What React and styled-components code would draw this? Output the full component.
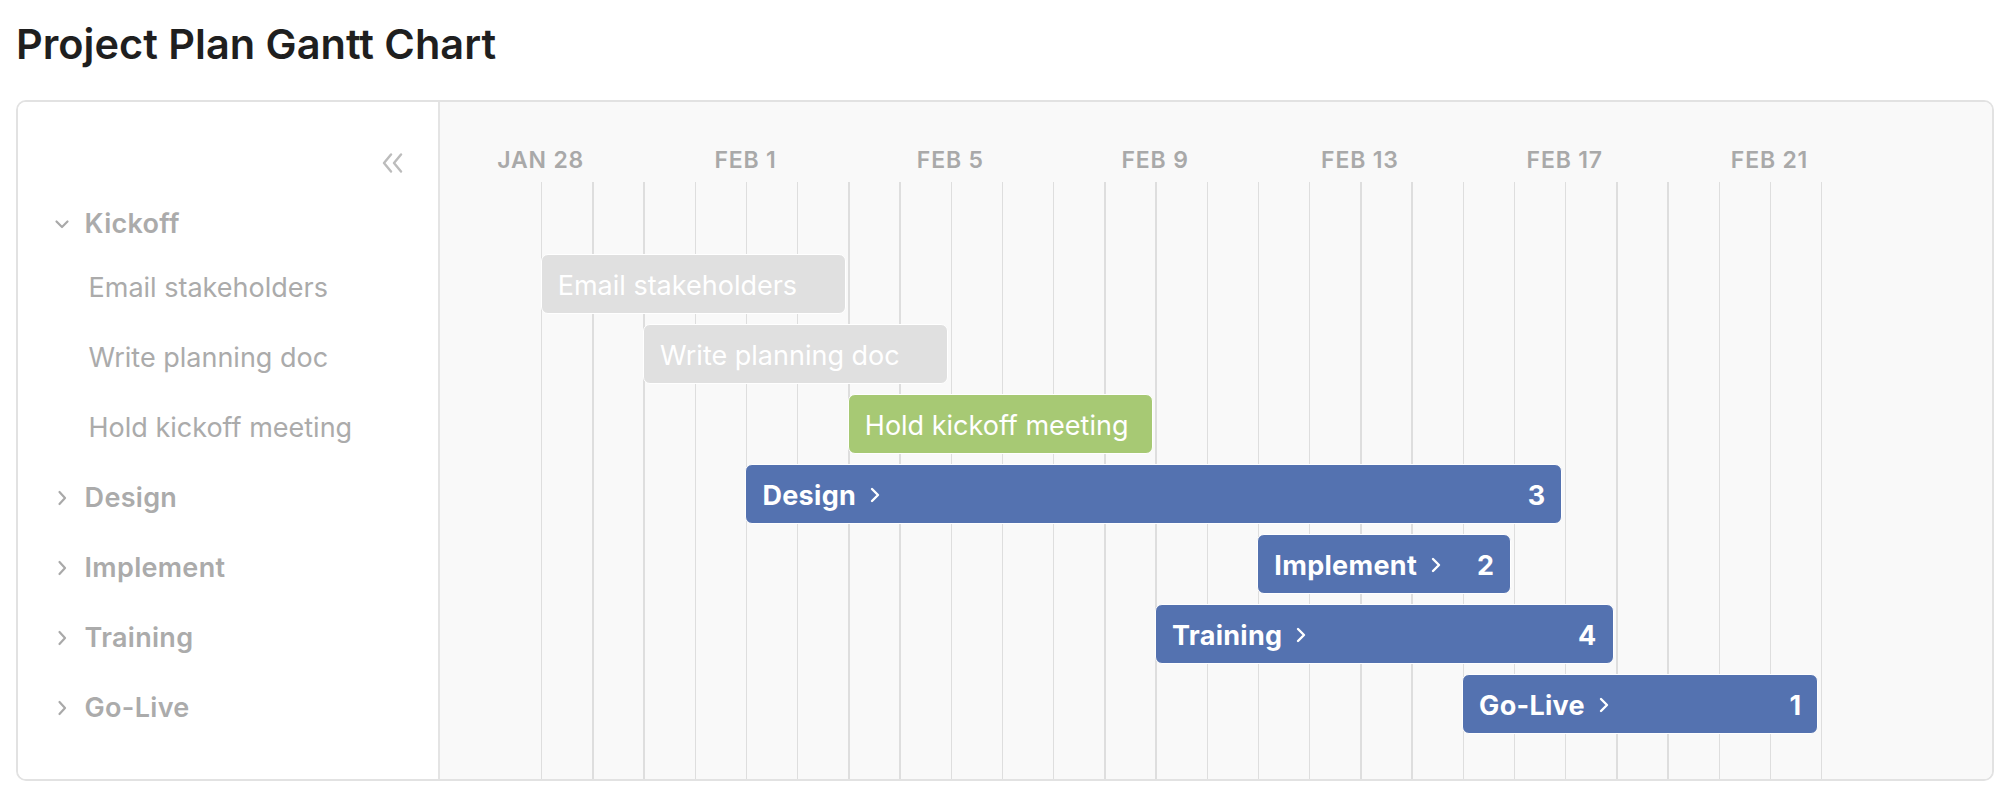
import React from 'react';
import styled, {createGlobalStyle} from 'styled-components';

const DAY = 51.2;
const DAYS = 25;

const dates = ['Jan 28', 'Feb 1', 'Feb 5', 'Feb 9', 'Feb 13', 'Feb 17', 'Feb 21'];

// start = day index from Jan 28, days = length
const rows = [
  {name: 'Kickoff', group: true, open: true},
  {name: 'Email stakeholders', start: 0, days: 6, tone: 'done'},
  {name: 'Write planning doc', start: 2, days: 6, tone: 'done'},
  {name: 'Hold kickoff meeting', start: 6, days: 6, tone: 'active'},
  {name: 'Design', group: true, start: 4, days: 16, count: 3},
  {name: 'Implement', group: true, start: 14, days: 5, count: 2},
  {name: 'Training', group: true, start: 12, days: 9, count: 4},
  {name: 'Go-Live', group: true, start: 18, days: 7, count: 1},
];

const GlobalStyle = createGlobalStyle`
  html, body {
    margin: 0;
    background: #fff;
  }
  body {
    font-family: Inter, "Noto Sans", sans-serif;
    -webkit-font-smoothing: antialiased;
  }
`;

const Page = styled.div`
  padding: 20px 16px 0;
`;

const Title = styled.h1`
  margin: 0 0 32px;
  font-size: 41.5px;
  line-height: 48px;
  font-weight: 600;
  color: #1f1f1f;
`;

const Card = styled.div`
  display: flex;
  height: 681px;
  box-sizing: border-box;
  border: 2px solid #e2e2e2;
  border-radius: 10px;
  overflow: hidden;
`;

const Sidebar = styled.div`
  width: 422px;
  flex-shrink: 0;
  box-sizing: border-box;
  border-right: 2px solid #e4e4e4;
  background: #fff;
`;

const SideHeader = styled.div`
  height: 80px;
  box-sizing: border-box;
  display: flex;
  align-items: flex-end;
  justify-content: flex-end;
  padding: 0 33px 7px 0;
`;

const CollapseButton = styled.button`
  width: 24px;
  height: 24px;
  padding: 0;
  border: 0;
  background: none;
  color: #bcbcbc;
  display: flex;
  align-items: center;
  justify-content: center;
  cursor: pointer;
`;

const Row = styled.div`
  height: 70px;
  box-sizing: border-box;
  display: flex;
  align-items: center;
  gap: 12.6px;
  padding: ${p => (p.$top || 0) + 1}px 0 0 ${p => (p.$task ? 70.5 : 34)}px;
  font-size: 27px;
  font-weight: ${p => (p.$task ? 400 : 600)};
  letter-spacing: ${p => (p.$task ? 0 : 0.3)}px;
  color: #ababab;
  white-space: nowrap;
`;

const Toggle = styled.svg`
  flex-shrink: 0;
  color: #a9a9a9;
`;

const Timeline = styled.div`
  flex: 1;
  min-width: 0;
  display: flex;
  flex-direction: column;
  background: #f9f9f9;
`;

const DateHeader = styled.div`
  height: 80px;
  flex-shrink: 0;
  box-sizing: border-box;
  display: flex;
  align-items: flex-end;
  padding-bottom: 8px;
  margin-left: -1.7px;
`;

const DateLabel = styled.div`
  width: ${DAY * 4}px;
  flex-shrink: 0;
  text-align: center;
  font-size: 23px;
  line-height: 28px;
  font-weight: 600;
  letter-spacing: 0.8px;
  color: #a9a9a9;
  text-transform: uppercase;
`;

const Body = styled.div`
  flex: 1;
  margin-left: 100.7px;
  width: ${DAY * DAYS + 1.5}px;
  display: grid;
  grid-template-columns: repeat(${DAYS}, ${DAY}px);
  grid-auto-rows: 70px;
  align-content: start;
  background-image: repeating-linear-gradient(
    to right,
    #dedede 0 1.5px,
    transparent 1.5px ${DAY}px
  );
`;

const tones = {
  done: '#e0e0e0',
  active: '#a7c974',
  group: '#5472b0',
};

const Bar = styled.div`
  grid-row: ${p => p.$row};
  grid-column: ${p => p.$start + 1} / span ${p => p.$days};
  height: 60px;
  margin: 2px 2px 0 0;
  box-sizing: border-box;
  border: 1.5px solid #fff;
  border-radius: 7px;
  background: ${p => tones[p.$tone]};
  color: #fff;
  display: flex;
  align-items: center;
  padding: 2px 16px 0;
  font-size: 27px;
  font-weight: ${p => (p.$tone === 'group' ? 700 : 400)};
  letter-spacing: ${p => (p.$tone === 'group' ? 0.3 : 0)}px;
  white-space: nowrap;
  overflow: hidden;
`;

const BarArrow = styled.svg`
  margin-left: 14px;
  flex-shrink: 0;
`;

const Count = styled.span`
  margin-left: auto;
`;

const ChevronDown = () => (
  <Toggle width="20" height="20" viewBox="0 0 20 20">
    <polyline points="4.5,7.5 10,13 15.5,7.5" fill="none" stroke="currentColor" strokeWidth="2.2" strokeLinecap="round" strokeLinejoin="round" />
  </Toggle>
);

const ChevronRight = () => (
  <Toggle width="20" height="20" viewBox="0 0 20 20">
    <polyline points="7.5,4 13,10 7.5,16" fill="none" stroke="currentColor" strokeWidth="2.2" strokeLinecap="round" strokeLinejoin="round" />
  </Toggle>
);

const App = () => {
  return (
    <Page>
      <GlobalStyle />
      <Title>Project Plan Gantt Chart</Title>
      <Card>
        <Sidebar>
          <SideHeader>
            <CollapseButton>
              <svg width="24" height="20" viewBox="0 0 24 20">
                <polyline points="10,1.5 3,10 10,18.5" fill="none" stroke="currentColor" strokeWidth="2.4" strokeLinecap="round" strokeLinejoin="round" />
                <polyline points="20,1.5 13,10 20,18.5" fill="none" stroke="currentColor" strokeWidth="2.4" strokeLinecap="round" strokeLinejoin="round" />
              </svg>
            </CollapseButton>
          </SideHeader>
          {rows.map((r, i) => (
            <Row key={r.name} $task={!r.group} $top={i === 0 ? 12 : 0}>
              {r.group && (r.open ? <ChevronDown /> : <ChevronRight />)}
              {r.name}
            </Row>
          ))}
        </Sidebar>
        <Timeline>
          <DateHeader>
            {dates.map(d => (
              <DateLabel key={d}>{d}</DateLabel>
            ))}
          </DateHeader>
          <Body>
            {rows.map((r, i) =>
              r.days ? (
                <Bar key={r.name} $row={i + 1} $start={r.start} $days={r.days} $tone={r.group ? 'group' : r.tone}>
                  {r.name}
                  {r.group && (
                    <>
                      <BarArrow width="10" height="16" viewBox="0 0 10 16">
                        <polyline points="2,2 8,8 2,14" fill="none" stroke="#fff" strokeWidth="2.4" strokeLinecap="round" strokeLinejoin="round" />
                      </BarArrow>
                      <Count>{r.count}</Count>
                    </>
                  )}
                </Bar>
              ) : null
            )}
          </Body>
        </Timeline>
      </Card>
    </Page>
  );
};

export default App;
